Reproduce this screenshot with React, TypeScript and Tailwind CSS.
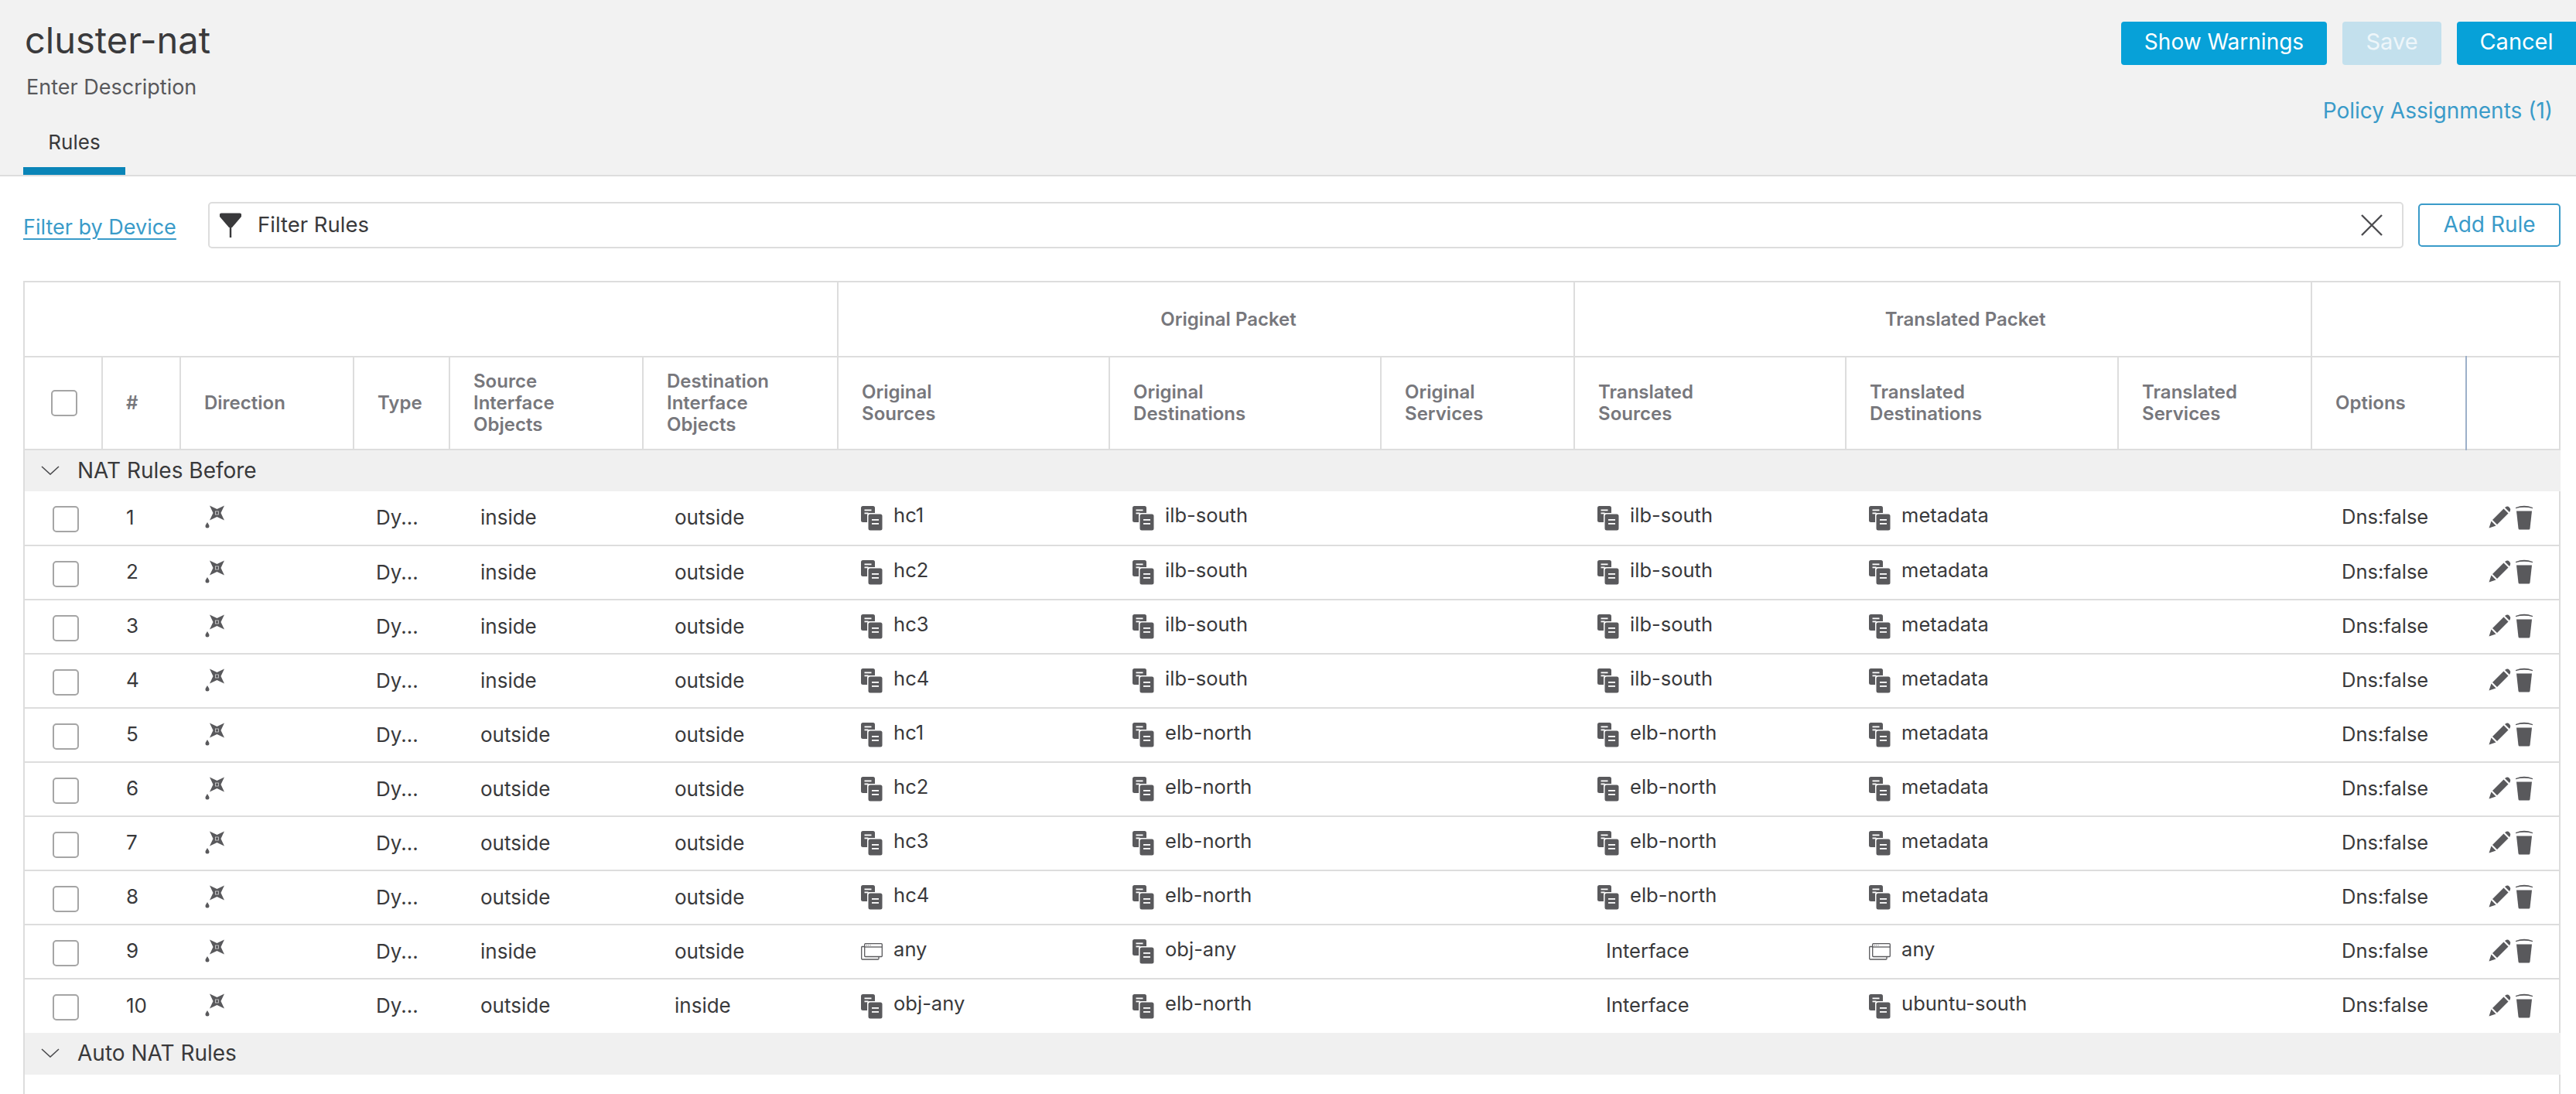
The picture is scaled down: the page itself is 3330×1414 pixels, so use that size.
import React from "react";

function DirectionIcon() {
  return (
    <svg width="27" height="31" viewBox="0 0 27 31" className="shrink-0">
      <path d="M6 1.5 L15.5 6 L25 1.5 L20.5 11 L25 20.5 L15.5 16 L6 20.5 L10.5 11 Z" fill="#59595c" />
      <rect x="13.5" y="9" width="4" height="4" fill="none" stroke="#d8d8d8" strokeWidth="0.8" />
      <path d="M3 23 C4.5 25.5 5.5 26.5 5.5 28 A2.5 2.5 0 0 1 0.5 28 C0.5 26.5 1.5 25.5 3 23 Z" fill="#59595c" />
    </svg>
  );
}

function ObjectIcon() {
  return (
    <svg width="28" height="32" viewBox="0 0 28 32" className="shrink-0">
      <rect x="0" y="0" width="18" height="21" rx="2.5" fill="#59595c" />
      <rect x="4.5" y="4.5" width="9" height="1.8" fill="#fff" />
      <rect x="4.5" y="8.5" width="5" height="1.8" fill="#fff" />
      <rect x="8" y="9" width="20" height="23" rx="3" fill="#fff" />
      <rect x="9.5" y="10.5" width="18" height="21" rx="2.5" fill="#59595c" />
      <rect x="14" y="17" width="9" height="1.8" fill="#fff" />
      <rect x="14" y="22" width="9" height="1.8" fill="#fff" />
    </svg>
  );
}

function WindowIcon() {
  return (
    <svg width="28" height="22" viewBox="0 0 28 22" className="shrink-0" fill="none" stroke="#59595c" strokeWidth="1.3">
      <path d="M4.5 4.5 H1.5 A1 1 0 0 0 0.7 5.5 V20 A1 1 0 0 0 1.5 21 H22 A1 1 0 0 0 23 20 V17.5" />
      <rect x="4.7" y="0.7" width="22.6" height="16.8" rx="1" />
      <path d="M4.7 5 H27.3" />
      <path d="M7 2.8 H7.9 M9.3 2.8 H10.2 M11.6 2.8 H12.5" strokeWidth="1" />
    </svg>
  );
}

function PencilIcon() {
  return (
    <svg width="29" height="29" viewBox="0 0 29 29" className="shrink-0">
      <path d="M0.5 28.5 L3.5 19.5 L9.5 25.5 Z" fill="#59595c" />
      <path d="M5 18 L19.5 3.5 L25.5 9.5 L11 24 Z" fill="#59595c" />
      <path d="M21 2 L23 0.8 Q25 0 27 2 Q29 4 28 6 L27 8 Z" fill="#59595c" />
    </svg>
  );
}

function TrashIcon() {
  return (
    <svg width="24" height="33" viewBox="0 0 24 33" className="shrink-0">
      <path d="M1 4 Q12 -0.5 23 4 L23 5.2 Q12 2.5 1 5.2 Z" fill="#59595c" />
      <path d="M2 8.5 H22 L19.5 31 Q19.3 32.5 18 32.5 H6 Q4.7 32.5 4.5 31 Z" fill="#59595c" />
    </svg>
  );
}

function FilterIcon() {
  return (
    <svg width="30" height="32" viewBox="0 0 30 32" className="shrink-0">
      <path d="M1 2 Q1 0.5 3 0.5 H27 Q29 0.5 29 2 L29 5 L17 19 H13 L1 5 Z" fill="#39393b" />
      <rect x="13.8" y="17" width="2.4" height="15" fill="#39393b" />
    </svg>
  );
}

function Chevron() {
  return (
    <svg width="24" height="12" viewBox="0 0 24 12" className="shrink-0" fill="none" stroke="#4a4a4d" strokeWidth="1.6">
      <path d="M1 1 L12 11 L23 1" />
    </svg>
  );
}

type Ref = { t: string; k?: "o" | "w" | "n" };
const O = (t: string): Ref => ({ t, k: "o" });

type Rule = { n: number; si: string; di: string; os: Ref; od: Ref; ts: Ref; td: Ref };

const rules: Rule[] = [
  { n: 1, si: "inside", di: "outside", os: O("hc1"), od: O("ilb-south"), ts: O("ilb-south"), td: O("metadata") },
  { n: 2, si: "inside", di: "outside", os: O("hc2"), od: O("ilb-south"), ts: O("ilb-south"), td: O("metadata") },
  { n: 3, si: "inside", di: "outside", os: O("hc3"), od: O("ilb-south"), ts: O("ilb-south"), td: O("metadata") },
  { n: 4, si: "inside", di: "outside", os: O("hc4"), od: O("ilb-south"), ts: O("ilb-south"), td: O("metadata") },
  { n: 5, si: "outside", di: "outside", os: O("hc1"), od: O("elb-north"), ts: O("elb-north"), td: O("metadata") },
  { n: 6, si: "outside", di: "outside", os: O("hc2"), od: O("elb-north"), ts: O("elb-north"), td: O("metadata") },
  { n: 7, si: "outside", di: "outside", os: O("hc3"), od: O("elb-north"), ts: O("elb-north"), td: O("metadata") },
  { n: 8, si: "outside", di: "outside", os: O("hc4"), od: O("elb-north"), ts: O("elb-north"), td: O("metadata") },
  { n: 9, si: "inside", di: "outside", os: { t: "any", k: "w" }, od: O("obj-any"), ts: { t: "Interface", k: "n" }, td: { t: "any", k: "w" } },
  { n: 10, si: "outside", di: "inside", os: O("obj-any"), od: O("elb-north"), ts: { t: "Interface", k: "n" }, td: O("ubuntu-south") },
];

function RefCell({ r }: { r: Ref }) {
  if (r.k === "n") {
    return (
      <td className="pb-[2px] pl-[41px] align-middle text-[25.5px]">{r.t}</td>
    );
  }
  return (
    <td className="pl-[30px] align-middle text-[25.5px]">
      <div className="flex items-center gap-[14px]">
        {r.k === "w" ? <WindowIcon /> : <ObjectIcon />}
        <span className="pb-[6px]">{r.t}</span>
      </div>
    </td>
  );
}

const hd = "border-r-2 border-[#ddd] pl-[30px] text-left align-middle text-[24px] leading-[28px] font-semibold text-[#77777c]";

function GroupRow({ label }: { label: string }) {
  return (
    <tr className="h-[54px] bg-[#f0f0f0]">
      <td colSpan={14} className="align-middle">
        <div className="flex items-center gap-[23px] pb-[2px] pl-[21px] text-[28px] text-[#39393b]">
          <Chevron />
          <span>{label}</span>
        </div>
      </td>
    </tr>
  );
}

export default function App() {
  return (
    <div className="flex h-[1414px] w-[3330px] flex-col overflow-hidden bg-white text-[26px] text-[#39393b] [font-family:Inter,sans-serif]">
      <header className="flex h-[228px] shrink-0 justify-between border-b-2 border-[#ddd] bg-[#f2f2f2]">
        <div className="flex flex-col">
          <h1 className="mt-[24px] pl-[32px] text-[47px] leading-[56px] font-normal text-[#3a3a3c]">cluster-nat</h1>
          <p className="mt-[19px] pl-[34px] text-[27px] leading-[28px] text-[#58585b]">Enter Description</p>
          <div className="mt-[36px] ml-[30px] flex h-[63px] w-[132px] items-start justify-center border-b-[10px] border-[#0a85b8] pt-[3px] text-[26px] leading-[36px] text-[#39393b]">
            Rules
          </div>
        </div>
        <div className="flex flex-col items-end">
          <div className="mt-[28px] flex gap-[20px]">
            <button className="h-[56px] w-[266px] rounded-[4px] bg-[#07a1d8] pb-[4px] text-[28px] text-white">Show Warnings</button>
            <button className="h-[56px] w-[128px] rounded-[4px] bg-[#c3e0ed] pb-[4px] text-[29px] text-[#eef6fa]">Save</button>
            <button className="h-[56px] w-[154px] rounded-l-[4px] bg-[#07a1d8] pb-[4px] text-[29px] text-white">Cancel</button>
          </div>
          <a className="mt-[41px] mr-[30px] text-[28px] leading-[36px] text-[#3a9bc9]">Policy Assignments (1)</a>
        </div>
      </header>

      <div className="mt-[33px] flex h-[60px] shrink-0 items-center pr-[20px] pl-[30px]">
        <a className="mt-[6px] w-[239px] text-[27px] text-[#3a9bc9] underline underline-offset-[5px]">Filter by Device</a>
        <div className="flex h-[60px] flex-1 items-center rounded-[5px] border-2 border-[#ddd] bg-white pr-[24px] pl-[12px]">
          <FilterIcon />
          <span className="ml-[20px] flex-1 text-[27.5px]">Filter Rules</span>
          <svg width="30" height="30" viewBox="0 0 30 30" fill="none" stroke="#4d4d50" strokeWidth="2.4">
            <path d="M2 2 L28 28 M28 2 L2 28" />
          </svg>
        </div>
        <button className="ml-[19px] h-[56px] w-[184px] rounded-[5px] border-2 border-[#3a9bc9] pb-[2px] text-[28px] text-[#3a9bc9]">Add Rule</button>
      </div>

      <div className="mt-[42px] mr-[20px] ml-[30px] flex-1 border-x-2 border-t-2 border-[#ddd]">
        <table className="w-[3276px] table-fixed border-collapse">
          <colgroup>
            <col className="w-[100px]" />
            <col className="w-[101px]" />
            <col className="w-[224px]" />
            <col className="w-[124px]" />
            <col className="w-[250px]" />
            <col className="w-[252px]" />
            <col className="w-[351px]" />
            <col className="w-[351px]" />
            <col className="w-[250px]" />
            <col className="w-[351px]" />
            <col className="w-[352px]" />
            <col className="w-[250px]" />
            <col className="w-[200px]" />
            <col className="w-[122px]" />
          </colgroup>
          <thead>
            <tr className="h-[96px] border-b-2 border-[#ddd]">
              <th colSpan={6} className="border-r-2 border-[#ddd]" />
              <th colSpan={3} className="border-r-2 border-[#ddd] pl-[58px] text-center text-[24px] font-semibold text-[#77777c]">Original Packet</th>
              <th colSpan={3} className="border-r-2 border-[#ddd] pl-[58px] text-center text-[24px] font-semibold text-[#77777c]">Translated Packet</th>
              <th colSpan={2} />
            </tr>
            <tr className="h-[120px] border-b-2 border-[#ddd]">
              <th className="border-r-2 border-[#ddd] pl-[34px] align-middle">
                <div className="h-[34px] w-[34px] rounded-[5px] border-2 border-[#a5a5a5]" />
              </th>
              <th className={hd}>#</th>
              <th className={hd}>Direction</th>
              <th className={hd}>Type</th>
              <th className={hd}>Source<br />Interface<br />Objects</th>
              <th className={hd}>Destination<br />Interface<br />Objects</th>
              <th className={hd}>Original<br />Sources</th>
              <th className={hd}>Original<br />Destinations</th>
              <th className={hd}>Original<br />Services</th>
              <th className={hd}>Translated<br />Sources</th>
              <th className={hd}>Translated<br />Destinations</th>
              <th className={hd}>Translated<br />Services</th>
              <th className="border-r-2 border-[#9db0c9] pl-[30px] text-left align-middle text-[24px] leading-[28px] font-semibold text-[#77777c]">Options</th>
              <th />
            </tr>
          </thead>
          <tbody>
            <GroupRow label="NAT Rules Before" />
            {rules.map((r, i) => (
              <tr key={r.n} className={i === rules.length - 1 ? "h-[70px]" : "h-[70px] border-b-2 border-[#ddd]"}>
                <td className="pt-[3px] pl-[36px] align-middle">
                  <div className="h-[34px] w-[34px] rounded-[5px] border-2 border-[#a5a5a5]" />
                </td>
                <td className="pb-[3px] pl-[31px] align-middle">{r.n}</td>
                <td className="pl-[32px] align-middle">
                  <div className="pb-[4px]"><DirectionIcon /></div>
                </td>
                <td className="pb-[2px] pl-[29px] align-middle">Dy...</td>
                <td className="pb-[2px] pl-[40px] align-middle">{r.si}</td>
                <td className="pb-[2px] pl-[41px] align-middle">{r.di}</td>
                <RefCell r={r.os} />
                <RefCell r={r.od} />
                <td />
                <RefCell r={r.ts} />
                <RefCell r={r.td} />
                <td />
                <td className="pb-[2px] pl-[39px] align-middle text-[25.5px]">Dns:false</td>
                <td className="pl-[29px] align-middle">
                  <div className="flex items-center gap-[5px] pb-[3px]">
                    <PencilIcon />
                    <TrashIcon />
                  </div>
                </td>
              </tr>
            ))}
            <GroupRow label="Auto NAT Rules" />
          </tbody>
        </table>
      </div>
    </div>
  );
}
